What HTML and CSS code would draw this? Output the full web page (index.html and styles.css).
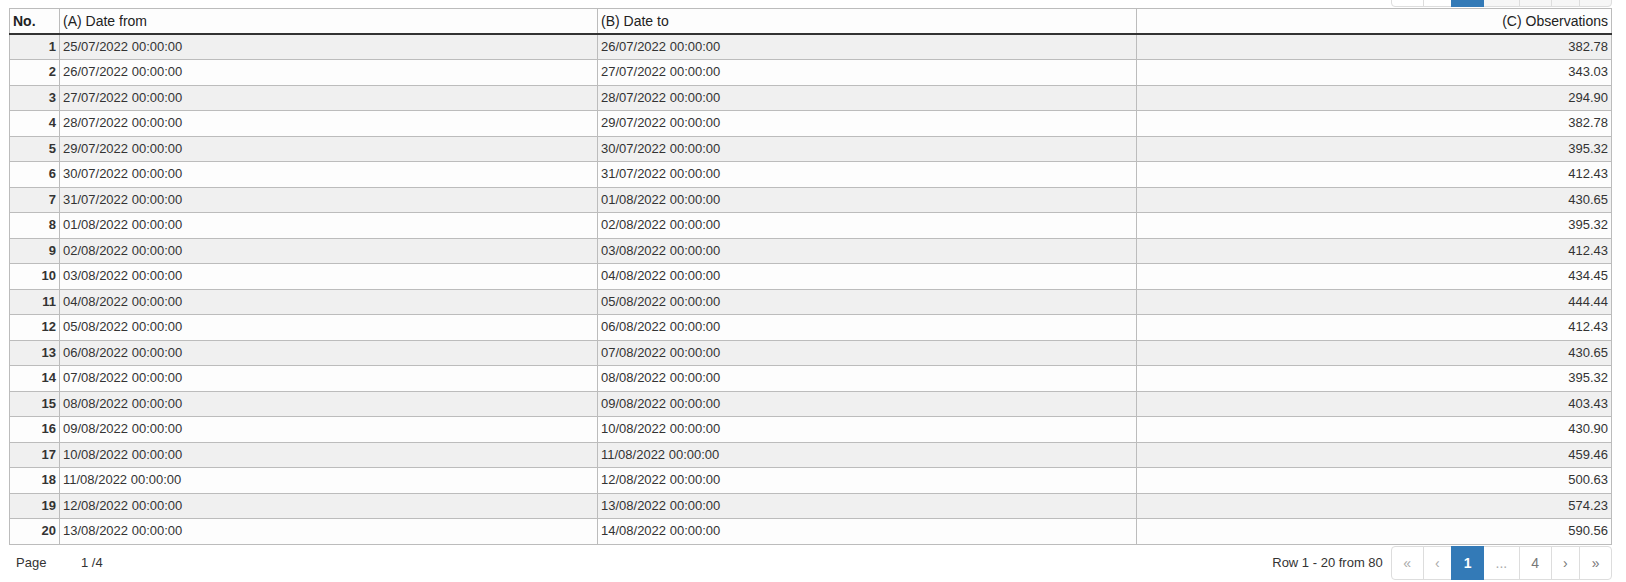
FILE: index.html
```html
<!DOCTYPE html>
<html>
<head>
<meta charset="utf-8">
<link rel="stylesheet" href="styles.css">
</head>
<body>
<div class="page">
  <div class="bar bar-top">
    <ul class="pagination pagination-top">
      <li class="pg-btn dis">&laquo;</li>
      <li class="pg-btn dis">&lsaquo;</li>
      <li class="pg-btn active">1</li>
      <li class="pg-btn dis alt">...</li>
      <li class="pg-btn alt">4</li>
      <li class="pg-btn alt">&rsaquo;</li>
      <li class="pg-btn alt">&raquo;</li>
    </ul>
  </div>
  <table class="grid">
    <colgroup>
      <col class="c-no"><col class="c-a"><col class="c-b"><col>
    </colgroup>
    <thead>
      <tr><th class="h-no">No.</th><th>(A) Date from</th><th>(B) Date to</th><th class="num">(C) Observations</th></tr>
    </thead>
    <tbody>
      <tr><td class="idx">1</td><td>25/07/2022 00:00:00</td><td>26/07/2022 00:00:00</td><td class="num">382.78</td></tr>
      <tr><td class="idx">2</td><td>26/07/2022 00:00:00</td><td>27/07/2022 00:00:00</td><td class="num">343.03</td></tr>
      <tr><td class="idx">3</td><td>27/07/2022 00:00:00</td><td>28/07/2022 00:00:00</td><td class="num">294.90</td></tr>
      <tr><td class="idx">4</td><td>28/07/2022 00:00:00</td><td>29/07/2022 00:00:00</td><td class="num">382.78</td></tr>
      <tr><td class="idx">5</td><td>29/07/2022 00:00:00</td><td>30/07/2022 00:00:00</td><td class="num">395.32</td></tr>
      <tr><td class="idx">6</td><td>30/07/2022 00:00:00</td><td>31/07/2022 00:00:00</td><td class="num">412.43</td></tr>
      <tr><td class="idx">7</td><td>31/07/2022 00:00:00</td><td>01/08/2022 00:00:00</td><td class="num">430.65</td></tr>
      <tr><td class="idx">8</td><td>01/08/2022 00:00:00</td><td>02/08/2022 00:00:00</td><td class="num">395.32</td></tr>
      <tr><td class="idx">9</td><td>02/08/2022 00:00:00</td><td>03/08/2022 00:00:00</td><td class="num">412.43</td></tr>
      <tr><td class="idx">10</td><td>03/08/2022 00:00:00</td><td>04/08/2022 00:00:00</td><td class="num">434.45</td></tr>
      <tr><td class="idx">11</td><td>04/08/2022 00:00:00</td><td>05/08/2022 00:00:00</td><td class="num">444.44</td></tr>
      <tr><td class="idx">12</td><td>05/08/2022 00:00:00</td><td>06/08/2022 00:00:00</td><td class="num">412.43</td></tr>
      <tr><td class="idx">13</td><td>06/08/2022 00:00:00</td><td>07/08/2022 00:00:00</td><td class="num">430.65</td></tr>
      <tr><td class="idx">14</td><td>07/08/2022 00:00:00</td><td>08/08/2022 00:00:00</td><td class="num">395.32</td></tr>
      <tr><td class="idx">15</td><td>08/08/2022 00:00:00</td><td>09/08/2022 00:00:00</td><td class="num">403.43</td></tr>
      <tr><td class="idx">16</td><td>09/08/2022 00:00:00</td><td>10/08/2022 00:00:00</td><td class="num">430.90</td></tr>
      <tr><td class="idx">17</td><td>10/08/2022 00:00:00</td><td>11/08/2022 00:00:00</td><td class="num">459.46</td></tr>
      <tr><td class="idx">18</td><td>11/08/2022 00:00:00</td><td>12/08/2022 00:00:00</td><td class="num">500.63</td></tr>
      <tr><td class="idx">19</td><td>12/08/2022 00:00:00</td><td>13/08/2022 00:00:00</td><td class="num">574.23</td></tr>
      <tr><td class="idx">20</td><td>13/08/2022 00:00:00</td><td>14/08/2022 00:00:00</td><td class="num">590.56</td></tr>
    </tbody>
  </table>
  <div class="bar bar-bottom">
    <div class="page-info"><span class="lbl">Page</span><span class="val">1 /4</span></div>
    <div class="right">
      <span class="rows">Row 1 - 20 from 80</span>
      <ul class="pagination">
        <li class="pg-btn dis">&laquo;</li>
        <li class="pg-btn dis">&lsaquo;</li>
        <li class="pg-btn active">1</li>
        <li class="pg-btn dis">...</li>
        <li class="pg-btn">4</li>
        <li class="pg-btn">&rsaquo;</li>
        <li class="pg-btn">&raquo;</li>
      </ul>
    </div>
  </div>
</div>
</body>
</html>
```

FILE: styles.css
```css
html, body {
  margin: 0;
  padding: 0;
  background: #ffffff;
}
body {
  font-family: "Liberation Sans", Arial, sans-serif;
  color: #333;
  overflow: hidden;
}
.page {
  padding: 0 14px 0 9px;
}
.bar {
  display: flex;
  align-items: center;
  justify-content: space-between;
}
.bar-top {
  justify-content: flex-end;
  margin-top: -27px;
}
.pagination {
  display: flex;
  list-style: none;
  margin: 0;
  padding: 0;
}
.pg-btn {
  font-size: 14px;
  line-height: 20px;
  padding: 6px 11.5px;
  border: 1px solid #ddd;
  margin-left: -1px;
  background: #fff;
  color: #777;
  text-align: center;
}
.pg-btn:first-child {
  margin-left: 0;
  border-radius: 4px 0 0 4px;
}
.pg-btn:last-child {
  border-radius: 0 4px 4px 0;
}
.pg-btn.dis {
  color: #aaa;
}
.pg-btn.active {
  background: #337ab7;
  border-color: #337ab7;
  color: #fff;
  font-weight: bold;
  position: relative;
  z-index: 1;
}
.pagination-top .alt {
  background: #f6f6f6;
}
.grid {
  width: 100%;
  border-collapse: collapse;
  table-layout: fixed;
  margin-top: 1px;
  font-size: 13px;
  color: #333;
}
.c-no { width: 50px; }
.c-a { width: 538px; }
.c-b { width: 539px; }
.grid th, .grid td {
  border: 1px solid #bcbcbc;
  padding: 4px 3px;
  line-height: 16.5px;
  text-align: left;
  white-space: nowrap;
  overflow: hidden;
}
.grid th {
  font-size: 14px;
  font-weight: normal;
  color: #222;
  background: #fdfdfd;
  border-bottom: 2px solid #333;
  padding: 4px 3px 3px;
}
.grid th.h-no {
  font-weight: bold;
}
.grid .num {
  text-align: right;
}
.grid td.idx {
  text-align: right;
  font-weight: bold;
}
.grid tbody tr:nth-child(odd) td {
  background: #f0f0f0;
}
.grid tbody tr:nth-child(even) td {
  background: #fdfdfd;
}
.bar-bottom {
  margin-top: 1px;
}
.page-info {
  font-size: 13px;
  color: #333;
  padding-left: 7px;
  display: flex;
}
.page-info .lbl {
  width: 65px;
}
.right {
  display: flex;
  align-items: center;
}
.rows {
  font-size: 13px;
  color: #333;
  margin-right: 8px;
}
```
